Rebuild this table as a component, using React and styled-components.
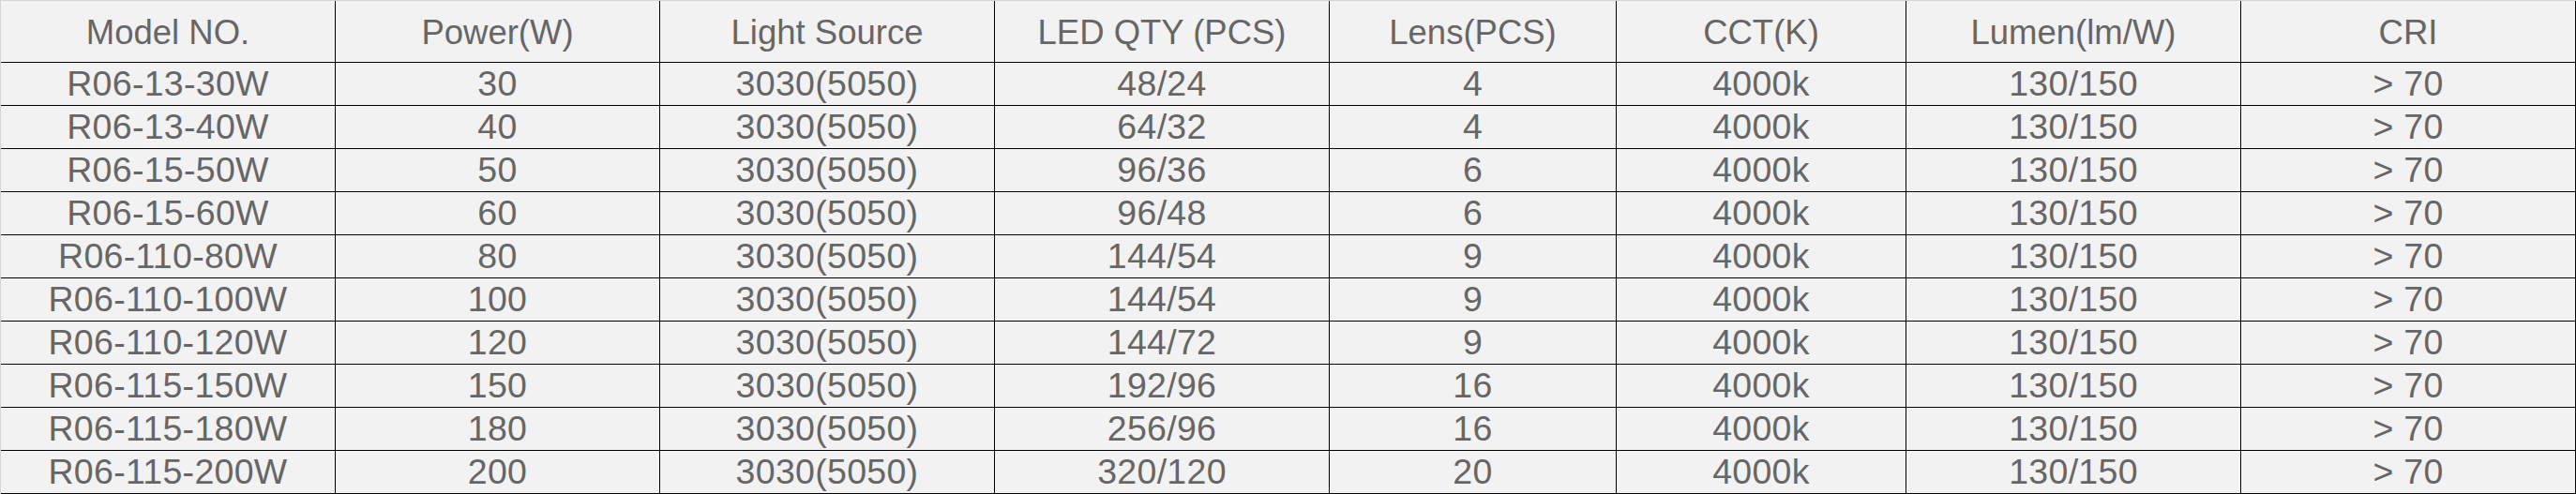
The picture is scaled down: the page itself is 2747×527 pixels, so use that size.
import React from "react";
import styled, { createGlobalStyle } from "styled-components";

const GlobalStyle = createGlobalStyle`
  html, body {
    margin: 0;
    padding: 0;
    background: #f2f2f2;
  }
`;

const columns = [357, 346, 357, 357, 306, 309, 357, 357];

const headers = [
  "Model NO.",
  "Power(W)",
  "Light Source",
  "LED QTY (PCS)",
  "Lens(PCS)",
  "CCT(K)",
  "Lumen(lm/W)",
  "CRI",
];

const rows = [
  ["R06-13-30W", "30", "3030(5050)", "48/24", "4", "4000k", "130/150", "> 70"],
  ["R06-13-40W", "40", "3030(5050)", "64/32", "4", "4000k", "130/150", "> 70"],
  ["R06-15-50W", "50", "3030(5050)", "96/36", "6", "4000k", "130/150", "> 70"],
  ["R06-15-60W", "60", "3030(5050)", "96/48", "6", "4000k", "130/150", "> 70"],
  ["R06-110-80W", "80", "3030(5050)", "144/54", "9", "4000k", "130/150", "> 70"],
  ["R06-110-100W", "100", "3030(5050)", "144/54", "9", "4000k", "130/150", "> 70"],
  ["R06-110-120W", "120", "3030(5050)", "144/72", "9", "4000k", "130/150", "> 70"],
  ["R06-115-150W", "150", "3030(5050)", "192/96", "16", "4000k", "130/150", "> 70"],
  ["R06-115-180W", "180", "3030(5050)", "256/96", "16", "4000k", "130/150", "> 70"],
  ["R06-115-200W", "200", "3030(5050)", "320/120", "20", "4000k", "130/150", "> 70"],
];

const SpecTable = styled.div`
  display: grid;
  grid-template-columns: ${columns.map((w) => `${w}px`).join(" ")};
  width: 2747px;
  box-sizing: border-box;
  border-top: 1px solid #d6d6d6;
  border-left: 1px solid #d6d6d6;
  background: #f2f2f2;
  font-family: "Liberation Sans", Arial, sans-serif;
  color: #666666;
`;

const Cell = styled.div`
  box-sizing: border-box;
  display: flex;
  align-items: center;
  justify-content: center;
  border-right: 1px solid #000;
  border-bottom: 1px solid #000;
  white-space: nowrap;
  height: ${(p) => (p.$header ? "66px" : "46px")};
  padding-top: ${(p) => (p.$header ? "3px" : "1px")};
  font-size: ${(p) => (p.$header ? "36.5px" : "37.5px")};
  letter-spacing: ${(p) => (p.$header ? "0" : "0.3px")};
  line-height: 1;
`;

export default function App() {
  return (
    <>
      <GlobalStyle />
      <SpecTable>
        {headers.map((h) => (
          <Cell $header key={h}>
            {h}
          </Cell>
        ))}
        {rows.map((r, i) =>
          r.map((v, j) => <Cell key={`${i}-${j}`}>{v}</Cell>)
        )}
      </SpecTable>
    </>
  );
}
